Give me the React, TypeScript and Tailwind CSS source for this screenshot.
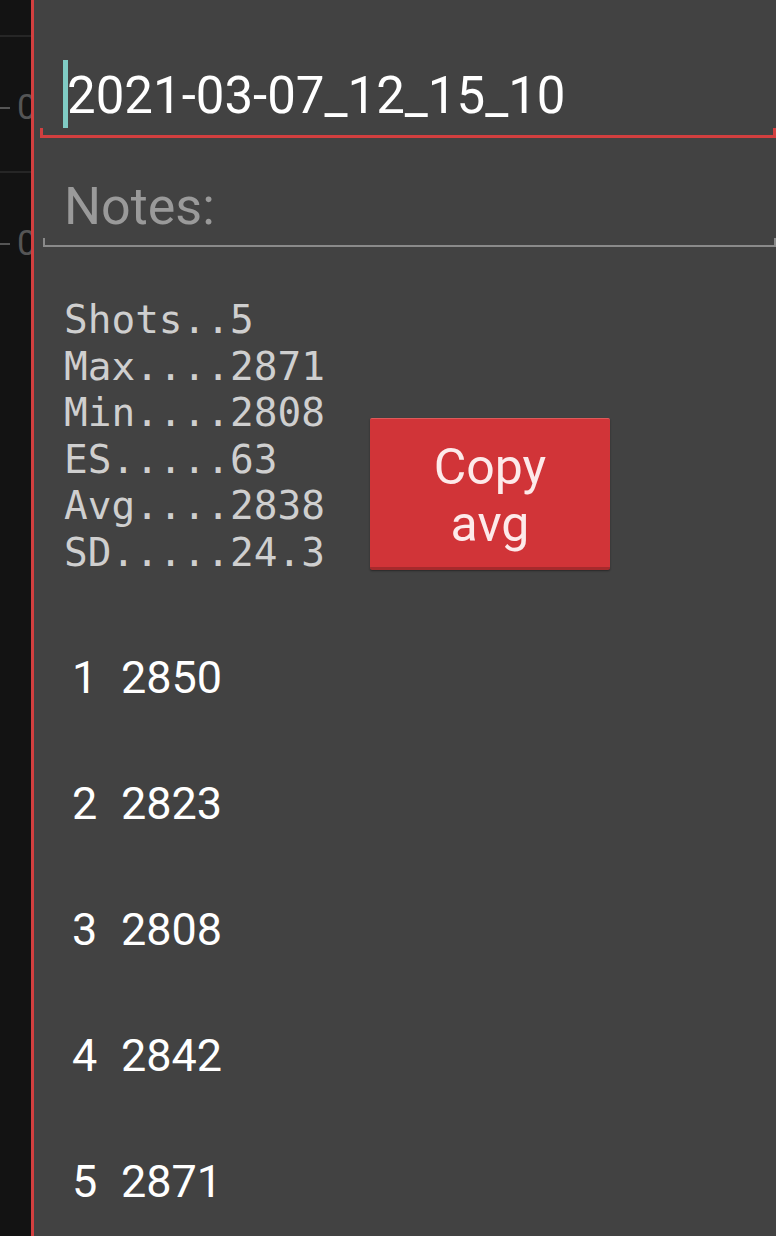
import React from 'react';

const stats = [
  'Shots..5',
  'Max....2871',
  'Min....2808',
  'ES.....63',
  'Avg....2838',
  'SD.....24.3',
];

const shots = [2850, 2823, 2808, 2842, 2871];

function AxisStrip() {
  return (
    <div className="w-[31px] shrink-0 bg-[#131313] overflow-hidden pt-[35px]">
      {[0, 1].map((i) => (
        <div key={i} className="h-[136px] border-t-2 border-[#262626] pt-[56px]">
          <div className="flex items-center whitespace-nowrap">
            <div className="w-[10px] h-[2px] bg-[#555555] shrink-0" />
            <span className="ml-[7px] text-[35px] leading-[30px] text-[#555555] font-['Roboto',sans-serif]">0</span>
          </div>
        </div>
      ))}
    </div>
  );
}

export default function App() {
  return (
    <div className="flex w-[776px] h-[1236px] overflow-hidden bg-[#424242] font-['Roboto',sans-serif]">
      <AxisStrip />
      <div className="w-[3px] shrink-0 bg-[#d23f3f]" />
      <div className="flex-1 flex flex-col bg-[#424242]">
        {/* session name */}
        <div className="shrink-0 pt-[60px] pl-[29px] flex items-start h-[128px]">
          <div className="w-[5px] h-[68px] bg-[#80cbc4] shrink-0" />
          <div className="-ml-[1px] mt-[2px] text-[51px] leading-[68px] text-white whitespace-nowrap">
            2021-03-07_12_15_10
          </div>
        </div>
        <div className="shrink-0 ml-[6px] h-[10px] border-x-[3px] border-b-[3px] border-[#d23f3f]" />

        {/* notes */}
        <div className="shrink-0 mt-[39px] pl-[30px] text-[52px] leading-[60px] text-[#9a9a9a]">Notes:</div>
        <div className="shrink-0 mt-[1px] ml-[9px] h-[9px] border-x-2 border-b-2 border-[#8a8a8a]" />

        {/* summary */}
        <div className="shrink-0 mt-[49px] pl-[30px] flex items-start">
          <div className="font-['DejaVu_Sans_Mono',monospace] text-[39.4px] leading-[46.6px] text-[#cfcfcf] whitespace-pre w-[306px]">
            {stats.map((s) => (
              <div key={s}>{s}</div>
            ))}
          </div>
          <button className="mt-[122px] w-[240px] h-[152px] pt-[6px] bg-[#d13438] border-t border-[#dd5a5a] border-b-[3px] border-b-[#a62a2c] shadow-[0_1px_2px_rgba(0,0,0,0.4)] rounded-[2px] flex items-center justify-center text-[#fdeaea] text-[50px] leading-[57px] text-center">
            Copy
            <br />
            avg
          </button>
        </div>

        {/* shot list */}
        <div className="shrink-0 mt-[39px] pl-[38px]">
          {shots.map((v, i) => (
            <div key={i} className="flex h-[126px] items-center text-[45px] leading-[126px] text-white">
              <span className="w-[49px]">{i + 1}</span>
              <span>{v}</span>
            </div>
          ))}
        </div>
      </div>
    </div>
  );
}
